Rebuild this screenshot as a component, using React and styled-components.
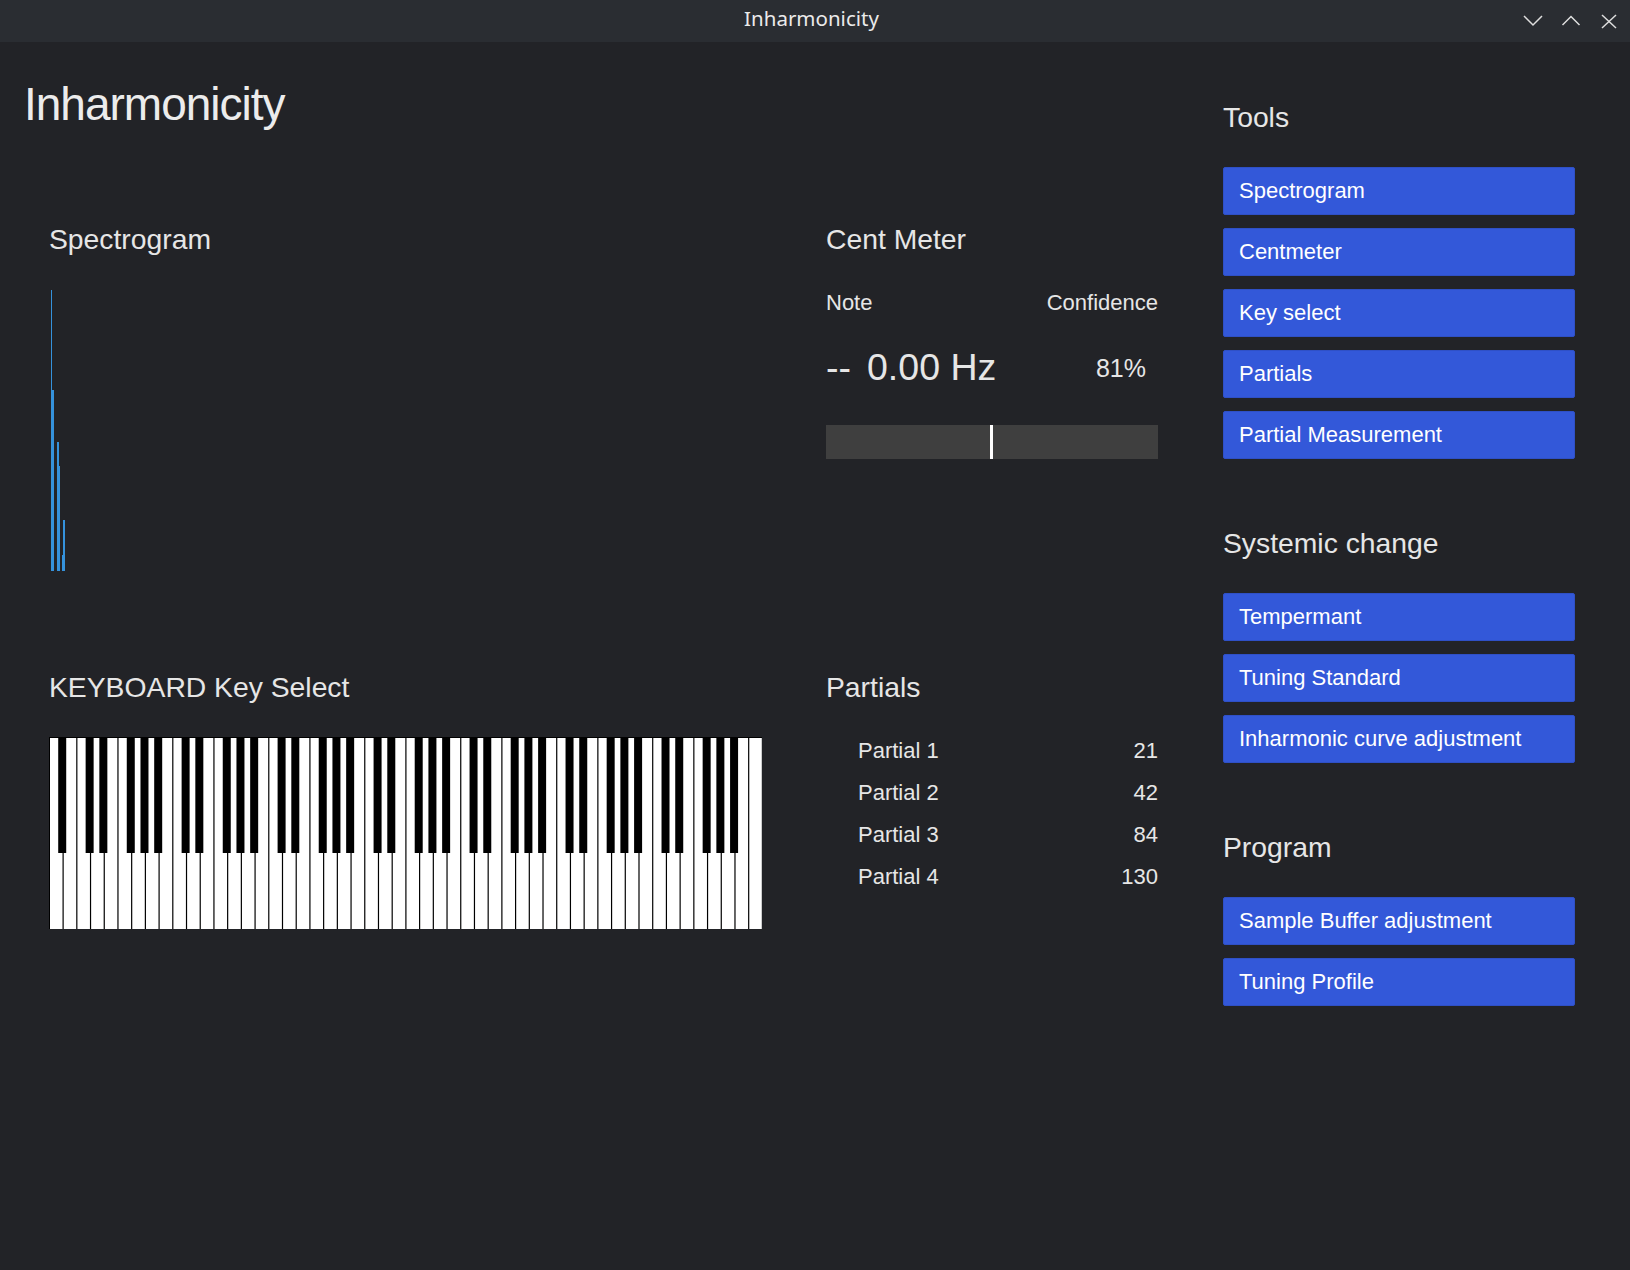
import React from "react";
import styled, { createGlobalStyle } from "styled-components";

const GlobalStyle = createGlobalStyle`
  html, body {
    margin: 0;
    padding: 0;
    background: #222327;
  }
  * {
    box-sizing: border-box;
  }
`;

const Window = styled.div`
  min-height: 100vh;
  display: flex;
  flex-direction: column;
  background: #222327;
  color: #e6e6e6;
  font-family: "Liberation Sans", Arial, sans-serif;
`;

const TitleBar = styled.div`
  height: 42px;
  flex-shrink: 0;
  display: grid;
  grid-template-columns: 1fr auto 1fr;
  align-items: center;
  background: #2a2d32;
`;

const WindowTitle = styled.div`
  grid-column: 2;
  margin: 0 7px 6px 0;
  font-family: "Noto Sans", sans-serif;
  font-size: 20.5px;
  line-height: 28px;
  color: #eaeaea;
`;

const Controls = styled.div`
  grid-column: 3;
  justify-self: end;
  display: flex;
  align-items: center;
  gap: 18px;
  padding-right: 11px;
`;

const ControlIcon = styled.svg`
  width: 20px;
  height: 20px;
  display: block;
  fill: none;
  stroke: #dedede;
  stroke-width: 1.5;
`;

const Main = styled.div`
  flex: 1;
  display: flex;
  padding: 39px 0 0 24px;
`;

const LeftArea = styled.div`
  display: flex;
  flex-direction: column;
`;

const AppTitle = styled.h1`
  margin: 0;
  font-size: 46px;
  line-height: 46px;
  font-weight: 400;
  letter-spacing: -1px;
  color: #ececec;
`;

const PanelGrid = styled.div`
  display: grid;
  grid-template-columns: 713px 332px;
  grid-template-rows: 448px auto;
  column-gap: 64px;
  margin: 96px 0 0 25px;
`;

const Panel = styled.section`
  display: flex;
  flex-direction: column;
`;

const Heading = styled.h2`
  margin: 0;
  font-size: 28.3px;
  line-height: 32px;
  font-weight: 400;
  color: #e6e6e6;
`;

const Spectrogram = styled.svg`
  display: block;
  margin-top: 35px;
  width: 713px;
  height: 281px;
`;

const Keyboard = styled.svg`
  display: block;
  margin-top: 34px;
  width: 713px;
  height: 192px;
`;

const LabelRow = styled.div`
  display: flex;
  justify-content: space-between;
  margin-top: 35px;
  font-size: 22px;
  line-height: 26px;
`;

const ValueRow = styled.div`
  display: flex;
  align-items: baseline;
  margin-top: 29px;
  line-height: 44px;
`;

const NoteName = styled.span`
  font-size: 37.5px;
  width: 41px;
`;

const Frequency = styled.span`
  font-size: 37.5px;
  flex: 1;
`;

const Confidence = styled.span`
  font-size: 25px;
  padding-right: 12px;
  position: relative;
  top: -3px;
`;

const Meter = styled.div`
  position: relative;
  margin-top: 32px;
  height: 34px;
  background: #3f3f3f;
`;

const Needle = styled.div`
  position: absolute;
  top: 0;
  bottom: 0;
  left: ${(p) => p.$pos}%;
  width: 3px;
  margin-left: -2px;
  background: #ffffff;
`;

const PartialList = styled.div`
  margin-top: 27px;
  display: flex;
  flex-direction: column;
`;

const PartialRow = styled.div`
  display: flex;
  justify-content: space-between;
  padding-left: 32px;
  font-size: 22px;
  line-height: 42px;
`;

const Sidebar = styled.aside`
  width: 352px;
  margin-left: 65px;
  padding-top: 20px;
  display: flex;
  flex-direction: column;
  gap: 68px;
`;

const ButtonGroup = styled.div`
  display: flex;
  flex-direction: column;
`;

const ButtonList = styled.div`
  margin-top: 34px;
  display: flex;
  flex-direction: column;
  gap: 13px;
`;

const ToolButton = styled.button`
  height: 48px;
  padding: 0 15px;
  border: 1px solid #2f50c6;
  border-radius: 2px;
  background: #3358d9;
  color: #ffffff;
  font-family: "Liberation Sans", Arial, sans-serif;
  font-size: 22px;
  text-align: left;
  cursor: pointer;
`;

const spectrumBars = [
  { x: 2, w: 1, y: 0, h: 100 },
  { x: 2, w: 3, y: 100, h: 181 },
  { x: 8, w: 2, y: 152, h: 129 },
  { x: 8, w: 3, y: 176, h: 105 },
  { x: 14, w: 2, y: 230, h: 51 },
  { x: 13, w: 3, y: 265, h: 16 },
];

const WHITE_COUNT = 52;
const KEY_W = 713 / WHITE_COUNT;
const NAMES = ["A", "B", "C", "D", "E", "F", "G"];
const SHARPS = ["A", "C", "D", "F", "G"];

const PianoKeys = () => {
  const whites = [];
  const blacks = [];
  for (let i = 0; i < WHITE_COUNT; i++) {
    whites.push(
      <rect key={"w" + i} x={i * KEY_W + 1} y={1} width={KEY_W - 1.2} height={191} fill="#ffffff" />
    );
    if (i < WHITE_COUNT - 1 && SHARPS.includes(NAMES[i % 7])) {
      const c = (i + 1) * KEY_W - 0.5;
      blacks.push(<rect key={"b" + i} x={c - 4} y={0} width={8} height={116} fill="#000000" />);
    }
  }
  return (
    <Keyboard viewBox="0 0 713 192">
      <rect x={0} y={0} width={713} height={192} fill="#000000" />
      {whites}
      {blacks}
    </Keyboard>
  );
};

const partials = [
  ["Partial 1", 21],
  ["Partial 2", 42],
  ["Partial 3", 84],
  ["Partial 4", 130],
];

const groups = [
  { title: "Tools", items: ["Spectrogram", "Centmeter", "Key select", "Partials", "Partial Measurement"] },
  { title: "Systemic change", items: ["Tempermant", "Tuning Standard", "Inharmonic curve adjustment"] },
  { title: "Program", items: ["Sample Buffer adjustment", "Tuning Profile"] },
];

const App = () => {
  return (
    <Window>
      <GlobalStyle />
      <TitleBar>
        <WindowTitle>Inharmonicity</WindowTitle>
        <Controls>
          <ControlIcon viewBox="0 0 20 20">
            <polyline points="1,5 10,14 19,5" />
          </ControlIcon>
          <ControlIcon viewBox="0 0 20 20">
            <polyline points="1.5,14 10,5.5 18.5,14" />
          </ControlIcon>
          <ControlIcon viewBox="0 0 20 20">
            <line x1="3" y1="4" x2="17" y2="17" />
            <line x1="17" y1="4" x2="3" y2="17" />
          </ControlIcon>
        </Controls>
      </TitleBar>

      <Main>
        <LeftArea>
          <AppTitle>Inharmonicity</AppTitle>
          <PanelGrid>
            <Panel>
              <Heading>Spectrogram</Heading>
              <Spectrogram viewBox="0 0 713 281">
                {spectrumBars.map((b, i) => (
                  <rect key={i} x={b.x} y={b.y} width={b.w} height={b.h} fill="#3592dc" />
                ))}
              </Spectrogram>
            </Panel>

            <Panel>
              <Heading>Cent Meter</Heading>
              <LabelRow>
                <span>Note</span>
                <span>Confidence</span>
              </LabelRow>
              <ValueRow>
                <NoteName>--</NoteName>
                <Frequency>0.00 Hz</Frequency>
                <Confidence>81%</Confidence>
              </ValueRow>
              <Meter>
                <Needle $pos={50} />
              </Meter>
            </Panel>

            <Panel>
              <Heading>KEYBOARD Key Select</Heading>
              <PianoKeys />
            </Panel>

            <Panel>
              <Heading>Partials</Heading>
              <PartialList>
                {partials.map(([name, value]) => (
                  <PartialRow key={name}>
                    <span>{name}</span>
                    <span>{value}</span>
                  </PartialRow>
                ))}
              </PartialList>
            </Panel>
          </PanelGrid>
        </LeftArea>

        <Sidebar>
          {groups.map((g) => (
            <ButtonGroup key={g.title}>
              <Heading>{g.title}</Heading>
              <ButtonList>
                {g.items.map((item) => (
                  <ToolButton key={item}>{item}</ToolButton>
                ))}
              </ButtonList>
            </ButtonGroup>
          ))}
        </Sidebar>
      </Main>
    </Window>
  );
};

export default App;
